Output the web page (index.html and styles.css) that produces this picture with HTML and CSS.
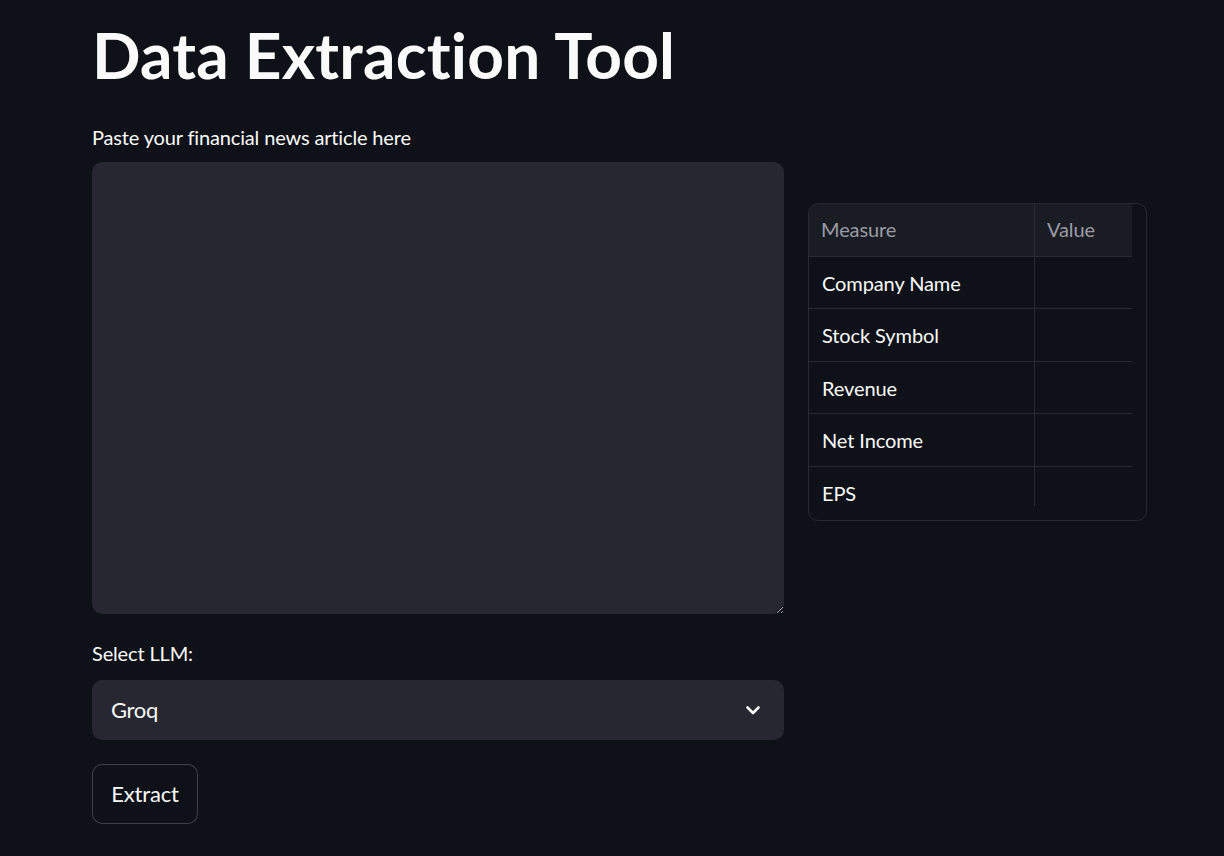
FILE: index.html
```html
<!DOCTYPE html>
<html lang="en">
<head>
<meta charset="utf-8">
<title>Data Extraction Tool</title>
<link rel="stylesheet" href="styles.css">
</head>
<body>
<main class="app">
  <h1 class="title">Data Extraction Tool</h1>
  <div class="columns">
    <section class="col-left">
      <label class="field-label" for="article">Paste your financial news article here</label>
      <textarea id="article" class="article"></textarea>
      <label class="field-label select-label">Select LLM:</label>
      <div class="select">
        <span class="select-value">Groq</span>
        <svg class="chevron" width="20" height="20" viewBox="0 0 20 20" aria-hidden="true">
          <path d="M4.5 7.5l5.5 5.5 5.5-5.5" fill="none" stroke="#fafafa" stroke-width="2.6" stroke-linecap="round" stroke-linejoin="round"/>
        </svg>
      </div>
      <button class="btn" type="button">Extract</button>
    </section>
    <section class="col-right">
      <div class="grid-wrap">
        <div class="grid">
          <div class="cell head first">Measure</div>
          <div class="cell head">Value</div>
          <div class="cell first">Company Name</div>
          <div class="cell"></div>
          <div class="cell first">Stock Symbol</div>
          <div class="cell"></div>
          <div class="cell first">Revenue</div>
          <div class="cell"></div>
          <div class="cell first">Net Income</div>
          <div class="cell"></div>
          <div class="cell first last">EPS</div>
          <div class="cell last"></div>
        </div>
      </div>
    </section>
  </div>
</main>
</body>
</html>
```
FILE: styles.css
```css
* { box-sizing: border-box; }

html, body {
  margin: 0;
  padding: 0;
  background: #0e1117;
  color: #fafafa;
  font-family: "Lato", "Noto Sans", sans-serif;
}

.app {
  width: 1055px;
  margin-left: 92px;
  padding-top: 17px;
}

.title {
  margin: 0;
  font-size: 64px;
  line-height: 1.2;
  font-weight: 700;
  letter-spacing: 0.2px;
}

.columns {
  display: flex;
  gap: 24px;
  margin-top: 31px;
}

.col-left {
  width: 692px;
  display: flex;
  flex-direction: column;
}

.col-right {
  width: 339px;
  padding-top: 78px;
}

.field-label {
  display: block;
  font-size: 20px;
  line-height: 1.2;
  letter-spacing: -0.15px;
  margin: 0;
}

.article {
  margin-top: 13px;
  width: 692px;
  height: 452px;
  background: #262730;
  border: none;
  border-radius: 10px;
  color: #fafafa;
  color-scheme: dark;
  resize: vertical;
  font-family: inherit;
  font-size: 20px;
  padding: 14px 19px;
  outline: none;
}

.select-label {
  margin-top: 27px;
}

.select {
  margin-top: 15px;
  height: 60px;
  background: #262730;
  border-radius: 10px;
  display: flex;
  align-items: center;
  justify-content: space-between;
  padding: 0 21px 0 19px;
}

.select-value {
  font-size: 22px;
  letter-spacing: -0.3px;
}

.chevron { display: block; }

.btn {
  margin-top: 24px;
  align-self: flex-start;
  width: 106px;
  height: 60px;
  background: #0e1117;
  color: #fafafa;
  border: 1px solid rgba(250, 250, 250, 0.2);
  border-radius: 10px;
  font-family: inherit;
  font-size: 22px;
  letter-spacing: -0.2px;
  padding: 0;
}

.grid-wrap {
  width: 339px;
  height: 318px;
  border: 1px solid #272a31;
  border-radius: 10px;
  overflow: hidden;
}

.grid {
  width: 323px;
  display: grid;
  grid-template-columns: 226px 97px;
  grid-template-rows: 53px repeat(4, 52.5px) 39px;
}

.cell {
  border-bottom: 1px solid #272a31;
  font-size: 20px;
  line-height: 24px;
  padding: 14px 0 0 13px;
  white-space: nowrap;
  letter-spacing: -0.1px;
}

.cell.first {
  border-right: 1px solid #272a31;
}

.cell.head {
  background: #1a1c24;
  color: #9a9ca3;
  padding-top: 13px;
  padding-left: 12px;
}

.cell.last {
  border-bottom: none;
}
```
